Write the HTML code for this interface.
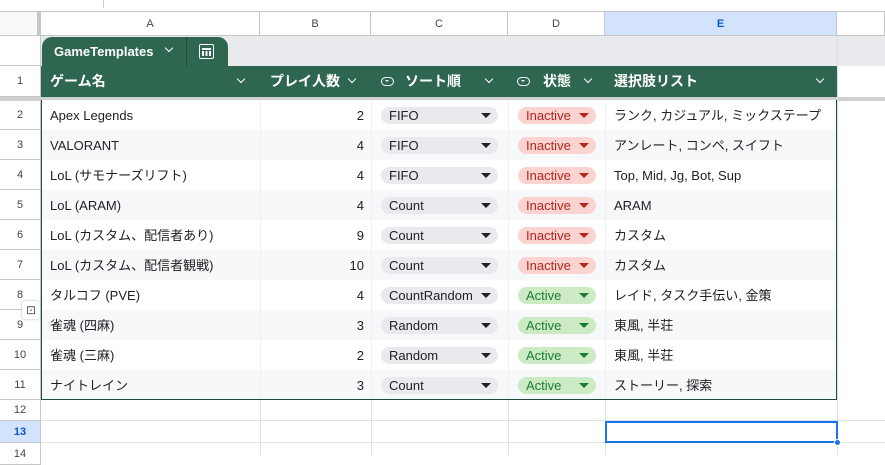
<!DOCTYPE html>
<html><head><meta charset="utf-8"><style>
*{box-sizing:border-box;margin:0;padding:0}
body{width:885px;height:455px;overflow:hidden;background:#fff;font-family:"Liberation Sans","Noto Sans CJK JP",sans-serif;font-size:13px;color:#202124;position:relative}
.a{position:absolute}
.vl{position:absolute;width:1px;background:#e1e1e1}
.hl{position:absolute;height:1px;background:#e1e1e1}
.ch{position:absolute;top:12px;height:24px;line-height:24px;text-align:center;font-size:11px;color:#444;border-right:1px solid #c7c7c7;border-bottom:1px solid #c7c7c7;background:#fff}
.rn{position:absolute;left:0;width:41px;text-align:center;font-size:11px;color:#444;border-bottom:1px solid #c7c7c7;border-right:1px solid #c7c7c7}
.cell{position:absolute;height:30px;line-height:32px;white-space:nowrap;overflow:hidden}
.chip{position:absolute;height:17px;line-height:17px;border-radius:9px;padding-left:8px;font-size:13px}
.chip:after{content:"";position:absolute;right:7px;top:6px;border-left:5px solid transparent;border-right:5px solid transparent;border-top:5px solid #202124}
.c{background:#e8eaed;left:381px;width:117px}
.in{background:#fbd3d0;color:#b3261e;left:518px;width:78px}
.in:after{border-top-color:#b3261e}
.ac{background:#ccebc5;color:#1e7b34;left:518px;width:78px}
.ac:after{border-top-color:#1e7b34}
.hd{position:absolute;top:66px;height:31px;line-height:31px;color:#fff;font-weight:bold;font-size:14px}
.chev{position:absolute;top:76px;width:6px;height:6px;border-right:1.4px solid #fff;border-bottom:1.4px solid #fff;transform:rotate(45deg)}
.ov{position:absolute;top:77px;width:13px;height:9px;border:1.5px solid #fff;border-radius:5px}
.ov:after{content:"";position:absolute;left:3px;top:2px;border-left:2.5px solid transparent;border-right:2.5px solid transparent;border-top:2.5px solid #fff}
</style></head><body>
<div class="a" style="left:0;top:0;width:885px;height:12px;border-bottom:1px solid #c7c7c7"></div>
<div class="a" style="left:103px;top:0;width:1px;height:8px;background:#ccc"></div>
<div class="a" style="left:0;top:12px;width:41px;height:24px;background:#f8f9fa;border-right:4px solid #c7c7c7;border-bottom:1px solid #c7c7c7"></div>
<div class="ch" style="left:41px;width:219px">A</div>
<div class="ch" style="left:260px;width:111px">B</div>
<div class="ch" style="left:371px;width:137px">C</div>
<div class="ch" style="left:508px;width:97px">D</div>
<div class="ch" style="left:605px;width:232px;background:#d3e3fd;color:#0b57d0;font-weight:bold">E</div>
<div class="ch" style="left:837px;width:48px"></div>
<div class="a" style="left:0;top:36px;width:41px;height:30px;border-right:1px solid #c7c7c7;border-bottom:1px solid #c7c7c7"></div>
<div class="a" style="left:41px;top:36px;width:844px;height:30px;background:#e8eaed"></div>
<div class="a" style="left:42px;top:37px;width:186px;height:30px;background:#2e6650;border-radius:10px 10px 0 0"></div>
<div class="a" style="left:186px;top:37px;width:1px;height:29px;background:#1f4c3b"></div>
<div class="a" style="left:54px;top:37px;line-height:29px;color:#fff;font-weight:bold;font-size:13px">GameTemplates</div>
<div class="chev" style="left:166px;top:45px;width:6px;height:6px"></div>
<div class="a" style="left:199px;top:44px;width:15px;height:15px;border:1.5px solid #fff;border-radius:2px"></div>
<div class="a" style="left:202px;top:48px;width:9px;height:1.5px;background:#fff"></div>
<div class="a" style="left:202px;top:51px;width:9px;height:5px;background:repeating-linear-gradient(90deg,#fff 0 2px,transparent 2px 3.5px)"></div>
<div class="rn" style="top:66px;height:31px;line-height:31px">1</div>
<div class="a" style="left:0;top:97px;width:885px;height:4px;background:#d0d0d0"></div>
<div class="rn" style="top:100px;height:30px;line-height:30px">2</div>
<div class="rn" style="top:130px;height:30px;line-height:30px">3</div>
<div class="rn" style="top:160px;height:30px;line-height:30px">4</div>
<div class="rn" style="top:190px;height:30px;line-height:30px">5</div>
<div class="rn" style="top:220px;height:30px;line-height:30px">6</div>
<div class="rn" style="top:250px;height:30px;line-height:30px">7</div>
<div class="rn" style="top:280px;height:30px;line-height:30px">8</div>
<div class="rn" style="top:310px;height:30px;line-height:30px">9</div>
<div class="rn" style="top:340px;height:30px;line-height:30px">10</div>
<div class="rn" style="top:370px;height:30px;line-height:30px">11</div>
<div class="rn" style="top:400px;height:21px;line-height:21px">12</div>
<div class="rn" style="top:421px;height:22px;line-height:22px;background:#d3e3fd;color:#0b57d0;font-weight:bold">13</div>
<div class="rn" style="top:443px;height:22px;line-height:22px">14</div>
<div class="a" style="left:22px;top:301px;width:18px;height:18px;background:#fff;border-radius:3px;box-shadow:0 0 2px #aaa;color:#555;font-size:12px;text-align:center;line-height:18px">⊡</div>
<div class="a" style="left:41px;top:66px;width:796px;height:31px;background:#2e6650"></div>
<div class="hd" style="left:50px">ゲーム名</div><div class="chev" style="left:238px"></div>
<div class="hd" style="left:270px">プレイ人数</div><div class="chev" style="left:349px"></div>
<div class="ov" style="left:381px"></div><div class="hd" style="left:405px">ソート順</div><div class="chev" style="left:486px"></div>
<div class="ov" style="left:517px"></div><div class="hd" style="left:543px">状態</div><div class="chev" style="left:585px"></div>
<div class="hd" style="left:614px">選択肢リスト</div><div class="chev" style="left:817px"></div>
<div class="a" style="left:41px;top:100px;width:796px;height:300px;border:1px solid #1f4c3b;border-top:none;background:repeating-linear-gradient(180deg,#fff 0 30px,#f6f8f9 30px 60px)"></div>
<div class="a" style="left:260px;top:100px;width:1px;height:299px;background:#eef0f1"></div>
<div class="a" style="left:371px;top:100px;width:1px;height:299px;background:#eef0f1"></div>
<div class="a" style="left:508px;top:100px;width:1px;height:299px;background:#eef0f1"></div>
<div class="a" style="left:605px;top:100px;width:1px;height:299px;background:#eef0f1"></div>
<div class="hl" style="left:41px;top:420px;width:844px"></div>
<div class="hl" style="left:41px;top:442px;width:844px"></div>
<div class="vl" style="left:260px;top:400px;height:55px"></div>
<div class="vl" style="left:371px;top:400px;height:55px"></div>
<div class="vl" style="left:508px;top:400px;height:55px"></div>
<div class="vl" style="left:605px;top:400px;height:55px"></div>
<div class="vl" style="left:837px;top:36px;height:419px"></div>
<div class="a" style="left:605px;top:421px;width:233px;height:22px;border:2px solid #1a73e8"></div>
<div class="a" style="left:834px;top:439px;width:7px;height:7px;border-radius:50%;background:#1a73e8;border:1px solid #fff"></div>

<div class="cell" style="left:50px;top:100px">Apex Legends</div><div class="cell" style="left:260px;width:104px;text-align:right;top:100px">2</div><div class="chip c" style="top:107px">FIFO</div><div class="chip in" style="top:107px">Inactive</div><div class="cell" style="left:614px;top:100px">ランク, カジュアル, ミックステープ</div>
<div class="cell" style="left:50px;top:130px">VALORANT</div><div class="cell" style="left:260px;width:104px;text-align:right;top:130px">4</div><div class="chip c" style="top:137px">FIFO</div><div class="chip in" style="top:137px">Inactive</div><div class="cell" style="left:614px;top:130px">アンレート, コンペ, スイフト</div>
<div class="cell" style="left:50px;top:160px">LoL (サモナーズリフト)</div><div class="cell" style="left:260px;width:104px;text-align:right;top:160px">4</div><div class="chip c" style="top:167px">FIFO</div><div class="chip in" style="top:167px">Inactive</div><div class="cell" style="left:614px;top:160px">Top, Mid, Jg, Bot, Sup</div>
<div class="cell" style="left:50px;top:190px">LoL (ARAM)</div><div class="cell" style="left:260px;width:104px;text-align:right;top:190px">4</div><div class="chip c" style="top:197px">Count</div><div class="chip in" style="top:197px">Inactive</div><div class="cell" style="left:614px;top:190px">ARAM</div>
<div class="cell" style="left:50px;top:220px">LoL (カスタム、配信者あり)</div><div class="cell" style="left:260px;width:104px;text-align:right;top:220px">9</div><div class="chip c" style="top:227px">Count</div><div class="chip in" style="top:227px">Inactive</div><div class="cell" style="left:614px;top:220px">カスタム</div>
<div class="cell" style="left:50px;top:250px">LoL (カスタム、配信者観戦)</div><div class="cell" style="left:260px;width:104px;text-align:right;top:250px">10</div><div class="chip c" style="top:257px">Count</div><div class="chip in" style="top:257px">Inactive</div><div class="cell" style="left:614px;top:250px">カスタム</div>
<div class="cell" style="left:50px;top:280px">タルコフ (PVE)</div><div class="cell" style="left:260px;width:104px;text-align:right;top:280px">4</div><div class="chip c" style="top:287px">CountRandom</div><div class="chip ac" style="top:287px">Active</div><div class="cell" style="left:614px;top:280px">レイド, タスク手伝い, 金策</div>
<div class="cell" style="left:50px;top:310px">雀魂 (四麻)</div><div class="cell" style="left:260px;width:104px;text-align:right;top:310px">3</div><div class="chip c" style="top:317px">Random</div><div class="chip ac" style="top:317px">Active</div><div class="cell" style="left:614px;top:310px">東風, 半荘</div>
<div class="cell" style="left:50px;top:340px">雀魂 (三麻)</div><div class="cell" style="left:260px;width:104px;text-align:right;top:340px">2</div><div class="chip c" style="top:347px">Random</div><div class="chip ac" style="top:347px">Active</div><div class="cell" style="left:614px;top:340px">東風, 半荘</div>
<div class="cell" style="left:50px;top:370px">ナイトレイン</div><div class="cell" style="left:260px;width:104px;text-align:right;top:370px">3</div><div class="chip c" style="top:377px">Count</div><div class="chip ac" style="top:377px">Active</div><div class="cell" style="left:614px;top:370px">ストーリー, 探索</div>
</body></html>
